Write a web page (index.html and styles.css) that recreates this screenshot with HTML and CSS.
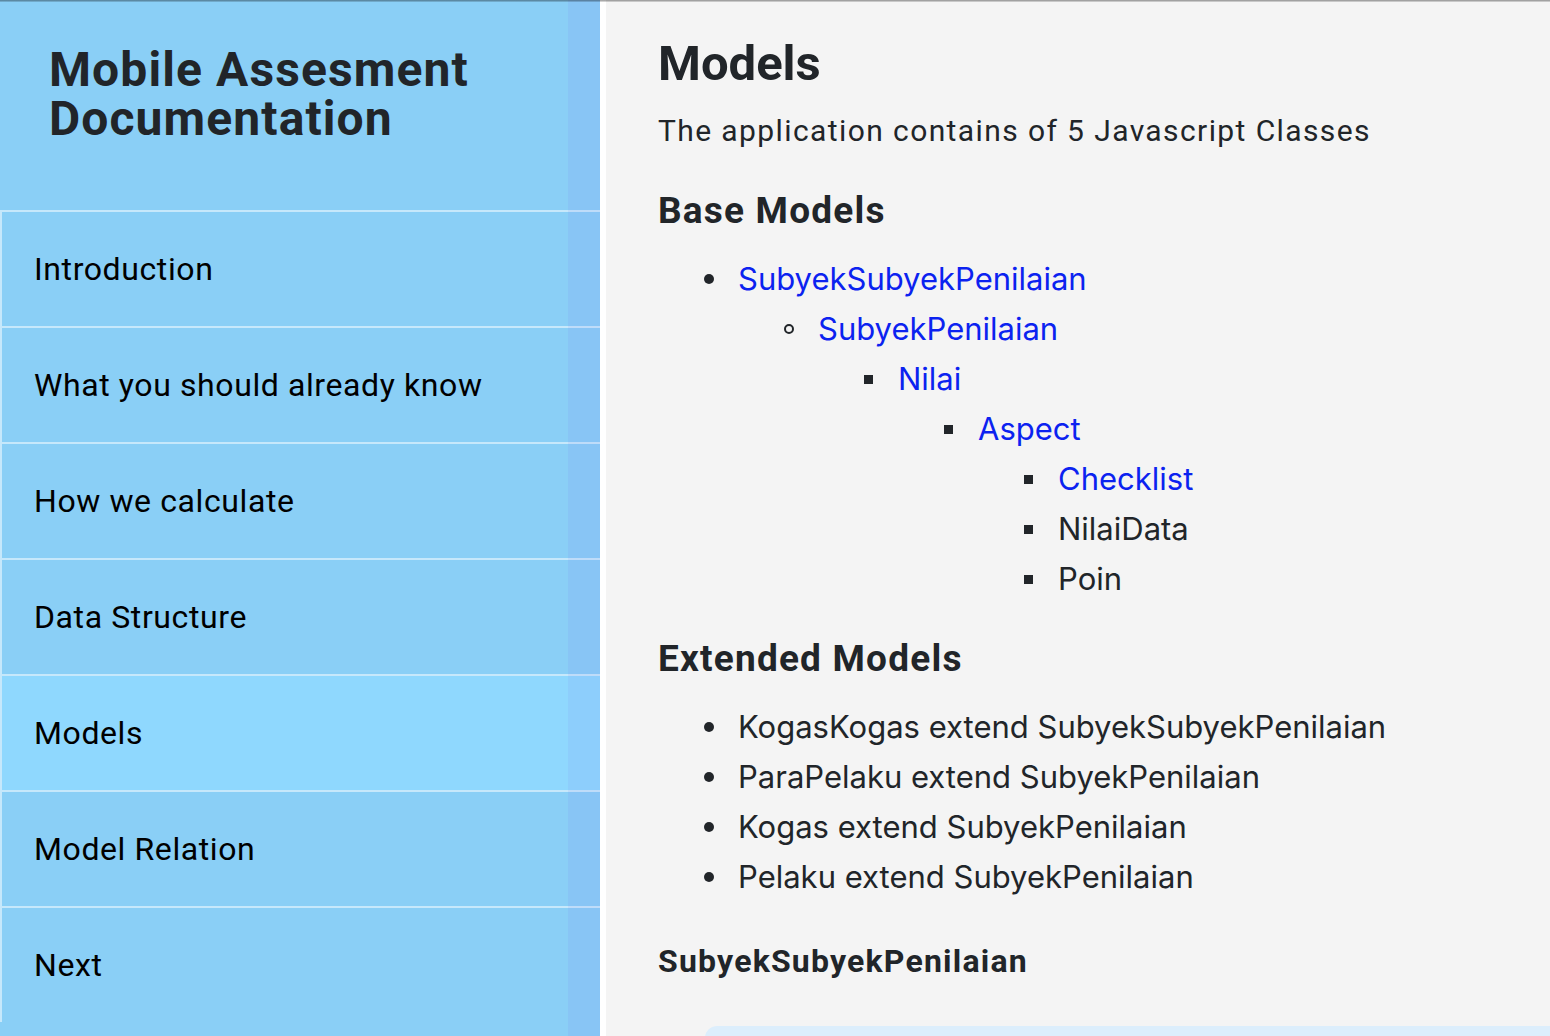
FILE: index.html
```html
<!DOCTYPE html>
<html lang="en">
<head>
<meta charset="utf-8">
<title>Mobile Assesment Documentation - Models</title>
<link rel="stylesheet" href="styles.css">
</head>
<body>
<div class="topshade"></div>
<div class="layout">
  <aside class="sidebar">
    <div class="brand">Mobile Assesment Documentation</div>
    <nav class="nav">
      <a class="nav-item" href="#">Introduction</a>
      <a class="nav-item" href="#">What you should already know</a>
      <a class="nav-item" href="#">How we calculate</a>
      <a class="nav-item" href="#">Data Structure</a>
      <a class="nav-item active" href="#">Models</a>
      <a class="nav-item" href="#">Model Relation</a>
      <a class="nav-item" href="#">Next</a>
    </nav>
    <div class="side-strip"></div>
  </aside>
  <main class="content">
    <h1 class="title">Models</h1>
    <p class="lead">The application contains of 5 Javascript Classes</p>
    <h2 class="section">Base Models</h2>
    <ul class="tree">
      <li><a href="#">SubyekSubyekPenilaian</a>
        <ul>
          <li><a href="#">SubyekPenilaian</a>
            <ul>
              <li><a href="#">Nilai</a>
                <ul>
                  <li><a href="#">Aspect</a>
                    <ul>
                      <li><a href="#">Checklist</a></li>
                      <li>NilaiData</li>
                      <li>Poin</li>
                    </ul>
                  </li>
                </ul>
              </li>
            </ul>
          </li>
        </ul>
      </li>
    </ul>
    <h2 class="section section-ext">Extended Models</h2>
    <ul class="tree tree-ext">
      <li>KogasKogas extend SubyekSubyekPenilaian</li>
      <li>ParaPelaku extend SubyekPenilaian</li>
      <li>Kogas extend SubyekPenilaian</li>
      <li>Pelaku extend SubyekPenilaian</li>
    </ul>
    <h3 class="sub">SubyekSubyekPenilaian</h3>
    <div class="codebox"></div>
  </main>
</div>
</body>
</html>
```

FILE: styles.css
```css
html, body {
  margin: 0;
  padding: 0;
  height: 100%;
}

body {
  position: relative;
  overflow: hidden;
  font-family: Roboto, "Liberation Sans", sans-serif;
  background: #f4f4f4;
  color: #212529;
}

.topshade {
  position: absolute;
  top: 0;
  left: 0;
  right: 0;
  height: 2px;
  background: linear-gradient(rgba(0, 0, 0, 0.42), rgba(0, 0, 0, 0.1));
  z-index: 5;
}

.layout {
  display: flex;
  height: 100vh;
}

.sidebar {
  position: relative;
  flex: 0 0 600px;
  background: #8acff6;
  display: flex;
  flex-direction: column;
}

.brand {
  box-sizing: border-box;
  height: 210px;
  padding: 45px 0 0 49px;
  font-size: 48px;
  line-height: 49px;
  font-weight: 700;
  color: #212529;
  letter-spacing: 1.1px;
}

.nav {
  display: flex;
  flex-direction: column;
}

.nav-item {
  box-sizing: border-box;
  height: 116px;
  display: flex;
  align-items: center;
  padding-left: 32px;
  border-top: 2px solid #c6e8fb;
  border-left: 2px solid #c6e8fb;
  color: #000;
  text-decoration: none;
  font-size: 32px;
  letter-spacing: 0.6px;
}

.nav-item.active {
  background: #8fd8fe;
}

.side-strip {
  position: absolute;
  top: 0;
  right: 0;
  width: 32px;
  height: 100%;
  background: rgba(128, 117, 236, 0.1);
}

.content {
  flex: 1;
  min-width: 0;
  border-left: 6px solid #ffffff;
  padding: 34px 0 0 52px;
  overflow: hidden;
}

.title {
  margin: 0;
  font-size: 49px;
  line-height: 60px;
  font-weight: 700;
}

.lead {
  margin: 17px 0 0;
  font-size: 30px;
  line-height: 40px;
  letter-spacing: 1.4px;
}

.section {
  margin: 38px 0 0;
  font-size: 37px;
  line-height: 44px;
  font-weight: 700;
  letter-spacing: 1.2px;
}

.section-ext {
  margin-top: 33px;
}

.tree {
  margin: 21px 0 0;
  padding-left: 80px;
  font-family: Inter, "Noto Sans", sans-serif;
  font-size: 31px;
  line-height: 50px;
  color: #212529;
  list-style: none;
}

.tree ul {
  margin: 0;
  padding-left: 80px;
  list-style: none;
}

.tree li {
  position: relative;
}

.tree li::before {
  content: "";
  position: absolute;
  left: -34px;
  top: 20px;
  width: 10px;
  height: 10px;
  box-sizing: border-box;
  background: #212529;
  border-radius: 50%;
}

.tree ul > li::before {
  background: transparent;
  border: 2px solid #212529;
}

.tree ul ul > li::before {
  background: #212529;
  border: 0;
  border-radius: 0;
  top: 21px;
  width: 9px;
  height: 9px;
}

.tree a {
  color: #0b22f0;
  text-decoration: none;
}

.sub {
  margin: 39px 0 0;
  font-size: 32px;
  line-height: 40px;
  font-weight: 700;
  letter-spacing: 1.2px;
}

.codebox {
  margin: 45px -40px 0 47px;
  height: 60px;
  background: #dceefc;
  border-radius: 12px;
}
```
